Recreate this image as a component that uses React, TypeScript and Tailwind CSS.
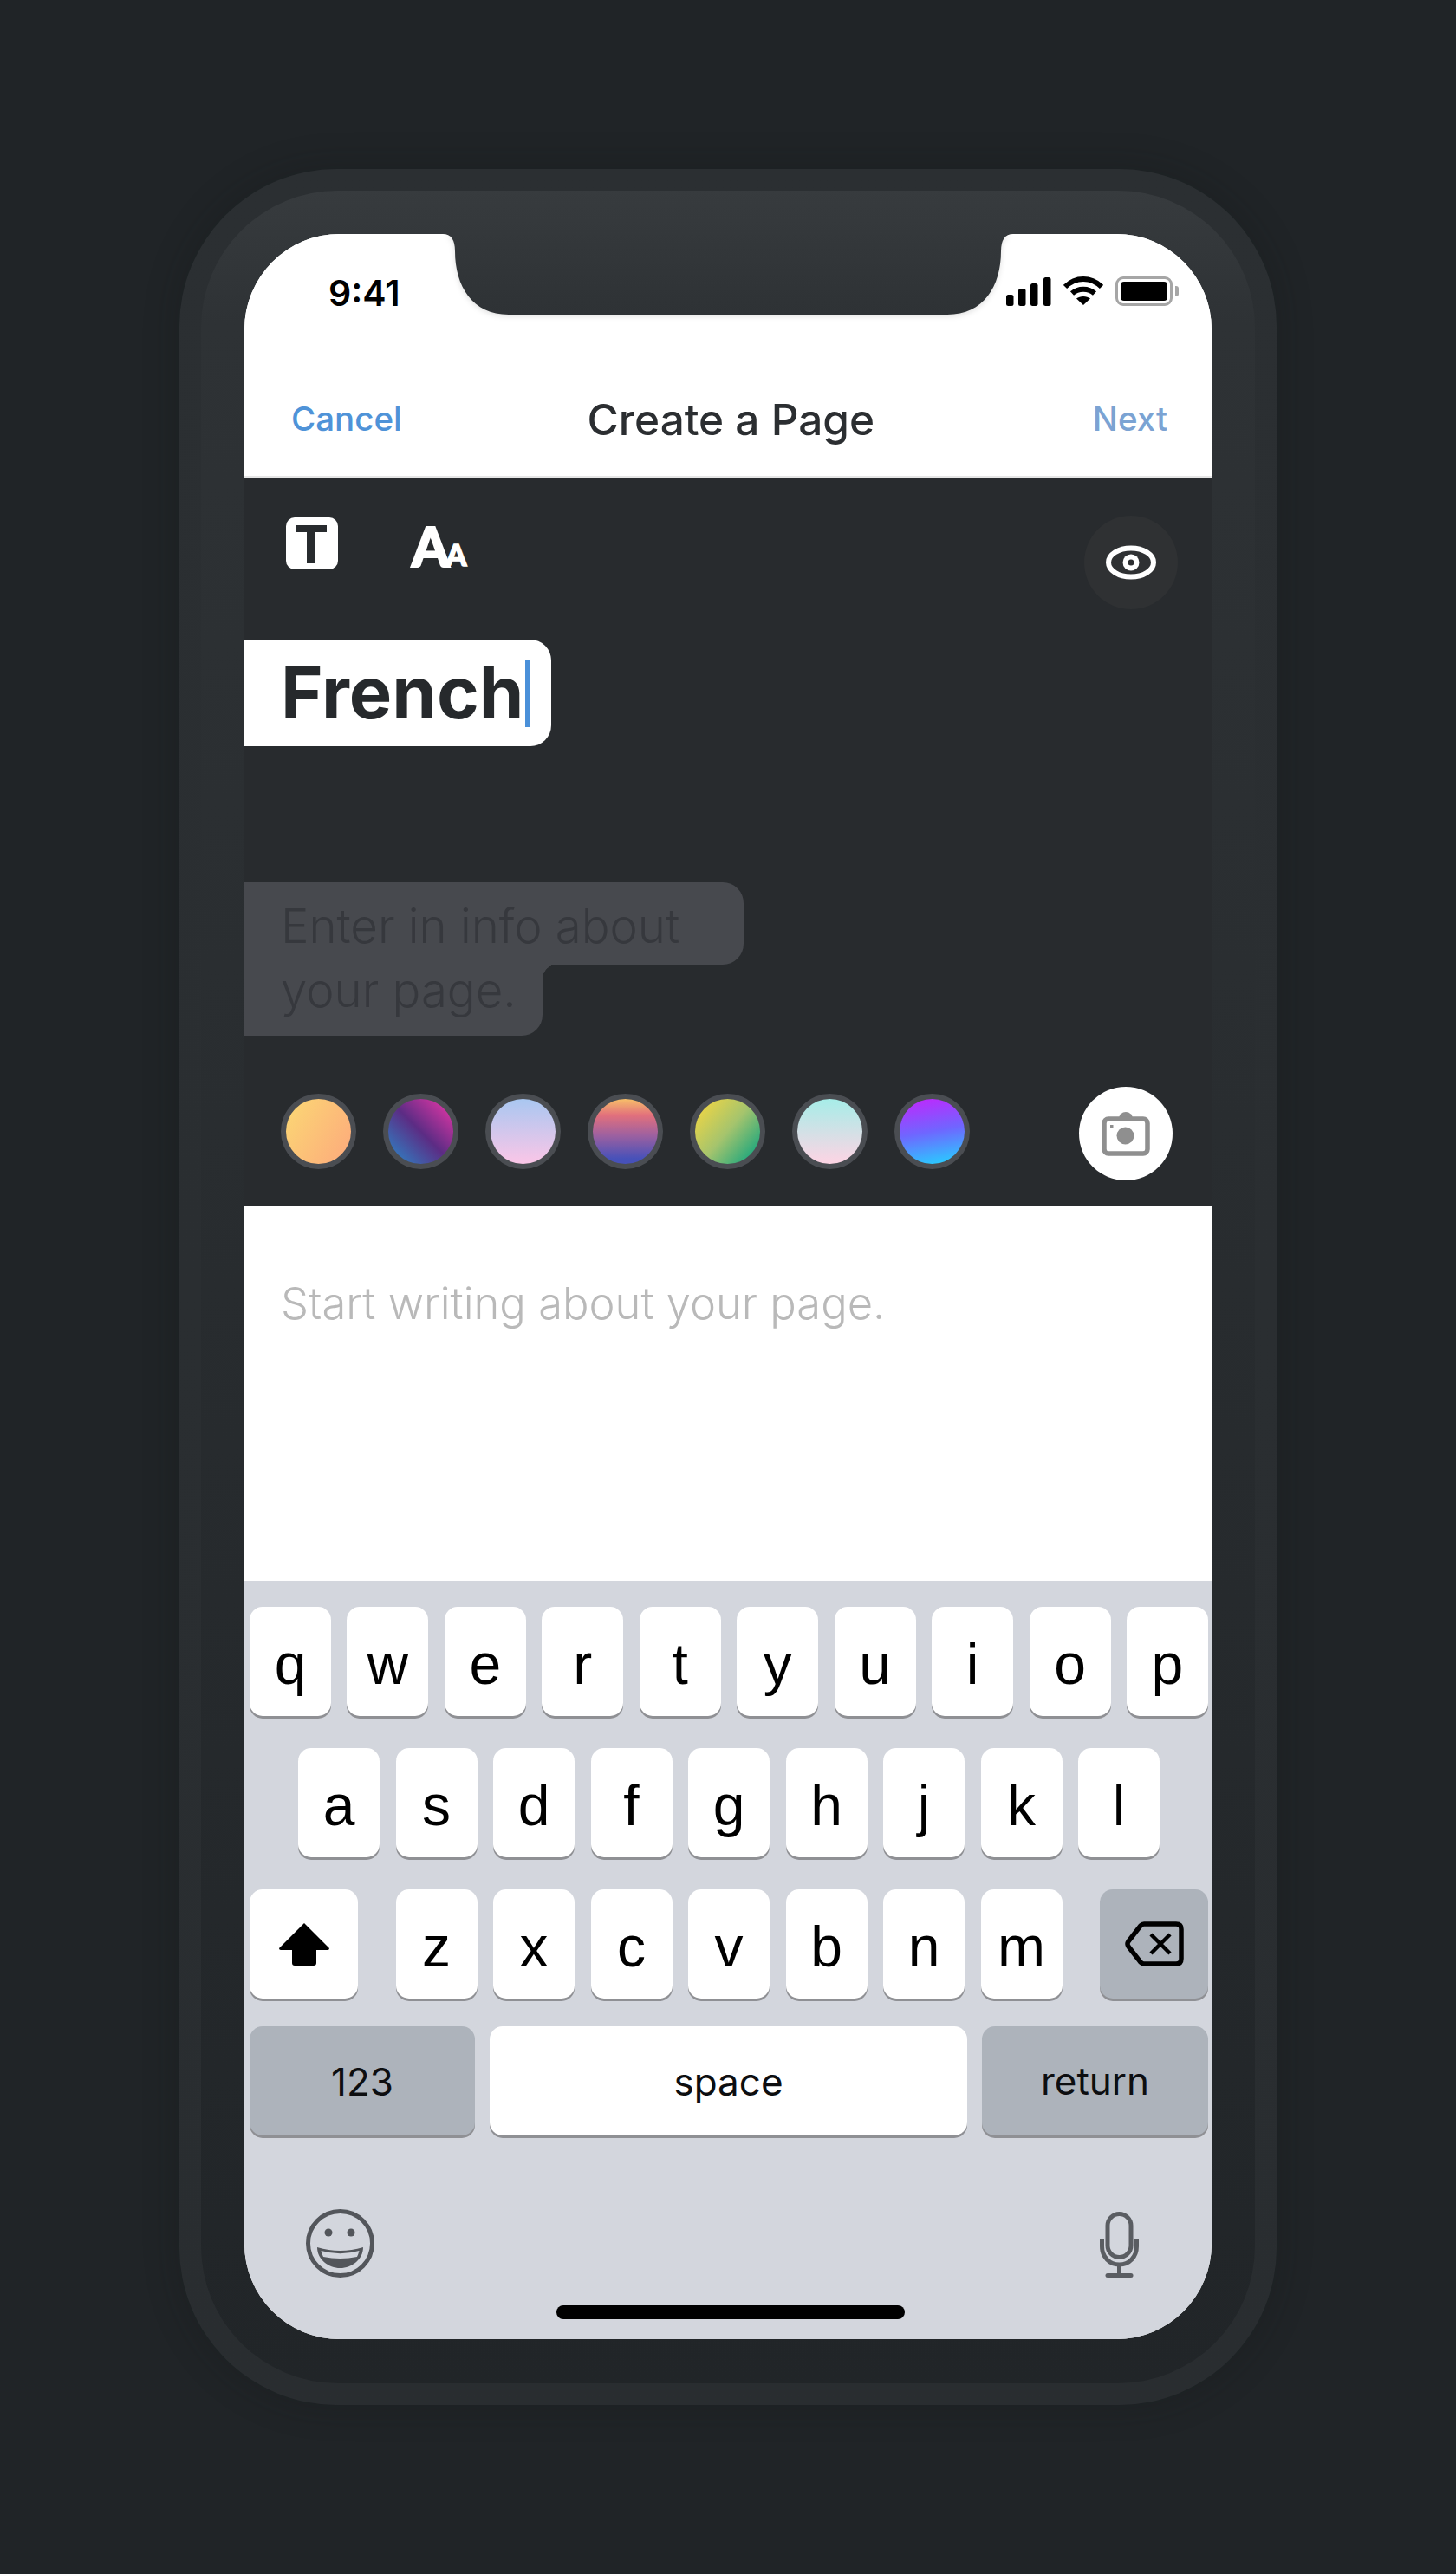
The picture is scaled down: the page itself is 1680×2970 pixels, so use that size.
const swatches = [
  "bg-[linear-gradient(120deg,#fbd874,#fda97c)]",
  "bg-[linear-gradient(45deg,#3378bd_10%,#5c2c84_50%,#da36a4_92%)]",
  "bg-[linear-gradient(180deg,#a9c7f1,#fbc6e7)]",
  "bg-[linear-gradient(180deg,#f7bf69_0%,#e2707c_25%,#a0619f_55%,#4751b9_92%)]",
  "bg-[linear-gradient(130deg,#eed545_8%,#a5c46d_50%,#16a57e_92%)]",
  "bg-[linear-gradient(180deg,#a6ede8,#fed4e4)]",
  "bg-[linear-gradient(170deg,#bb2bfd_5%,#6f66ff_50%,#29cbff_95%)]",
];

const rowOne = ["q", "w", "e", "r", "t", "y", "u", "i", "o", "p"];
const rowTwo = ["a", "s", "d", "f", "g", "h", "j", "k", "l"];
const rowThree = ["z", "x", "c", "v", "b", "n", "m"];

function Key({ label }: { label: string }) {
  return (
    <div className="flex h-[126px] w-[94px] items-center justify-center rounded-[15px] bg-white pt-[6px] text-[66px] text-black shadow-[0_3px_0_#8f9094]">
      {label}
    </div>
  );
}

function Notch() {
  return (
    <svg
      className="absolute left-[223px] top-0 drop-shadow-[0_2px_3px_rgba(0,0,0,0.12)]"
      width="670"
      height="93"
      viewBox="0 0 670 93"
    >
      <defs>
        <linearGradient id="notch" x1="0" y1="0" x2="0" y2="1">
          <stop offset="0" stopColor="#34383b" />
          <stop offset="1" stopColor="#2e3235" />
        </linearGradient>
      </defs>
      <path
        d="M0 0 H6 Q20 0 20 20 C20 60 40 93 82 93 H588 C630 93 650 60 650 20 Q650 0 664 0 H670 V-2 H0 Z"
        fill="url(#notch)"
      />
    </svg>
  );
}

function StatusIcons() {
  return (
    <div className="flex items-center gap-[14px]">
      <svg width="52" height="33" viewBox="0 0 52 33" fill="#000">
        <rect x="0" y="20" width="8.5" height="13" rx="2.5" />
        <rect x="14" y="13" width="8.5" height="20" rx="2.5" />
        <rect x="28" y="7" width="8.5" height="26" rx="2.5" />
        <rect x="43" y="0" width="8.5" height="33" rx="2.5" />
      </svg>
      <svg width="46" height="34" viewBox="0 0 46 34" fill="none" stroke="#000" strokeWidth="6">
        <path d="M2 12 C14 0 32 0 44 12" />
        <path d="M10 19.5 C17 13 29 13 36 19.5" />
        <path d="M23 33 L15 25.5 C19 22 27 22 31 25.5 Z" fill="#000" stroke="none" />
      </svg>
      <div className="flex items-center">
        <div className="h-[34px] w-[66px] rounded-[9px] border-[3px] border-[#a6a6a6] p-[3px]">
          <div className="h-full w-full rounded-[4px] bg-black" />
        </div>
        <div className="ml-[3px] h-[12px] w-[4px] rounded-r-[3px] bg-[#a6a6a6]" />
      </div>
    </div>
  );
}

function EyeIcon() {
  return (
    <svg width="58" height="40" viewBox="0 0 58 40" fill="none">
      <ellipse cx="29" cy="20" rx="26" ry="16.5" stroke="#fff" strokeWidth="6" />
      <circle cx="29" cy="20" r="9.5" fill="#fff" />
      <circle cx="29" cy="20" r="3.5" fill="#2c2e30" />
    </svg>
  );
}

function CameraIcon() {
  return (
    <svg width="56" height="52" viewBox="0 0 56 52" fill="none">
      <circle cx="28" cy="9" r="8" fill="#8f8f8f" />
      <rect x="3" y="9" width="50" height="40" rx="5" fill="#fff" stroke="#8f8f8f" strokeWidth="5.5" />
      <circle cx="27.5" cy="28.5" r="10" fill="#8f8f8f" />
      <rect x="10" y="16" width="3.5" height="3.5" fill="#8f8f8f" />
    </svg>
  );
}

function ShiftIcon() {
  return (
    <svg width="58" height="49" viewBox="0 0 58 49" fill="#000">
      <path d="M29 0 L58 29 Q58 31 56 31 H43 V46 Q43 49 40 49 H18 Q15 49 15 46 V31 H2 Q0 31 0 29 Z" />
    </svg>
  );
}

function DeleteIcon() {
  return (
    <svg width="68" height="52" viewBox="0 0 68 52" fill="none" stroke="#000" strokeWidth="5.5">
      <path
        d="M22 3 H59 Q65 3 65 9 V43 Q65 49 59 49 H22 Q20 49 18 47 L4 29 Q2 26 4 23 L18 5 Q20 3 22 3 Z"
        strokeLinejoin="round"
      />
      <path d="M30 15 L52 37 M52 15 L30 37" strokeWidth="4.5" />
    </svg>
  );
}

function EmojiIcon() {
  return (
    <svg width="79" height="79" viewBox="0 0 79 79" fill="none">
      <circle cx="39.5" cy="39.5" r="37" stroke="#53565b" strokeWidth="5" />
      <circle cx="26" cy="27" r="4.5" fill="#53565b" />
      <circle cx="52" cy="27" r="4.5" fill="#53565b" />
      <path d="M13 44 Q39.5 52 66 44 C66 58 53 68 39.5 68 C26 68 13 58 13 44 Z" fill="#53565b" />
      <path d="M17.5 48 Q39.5 54.5 61.5 48 Q60.5 52 59 55 Q39.5 59 20 55 Q18.5 52 17.5 48 Z" fill="#d3d6dd" />
    </svg>
  );
}

function MicIcon() {
  return (
    <svg width="45" height="76" viewBox="0 0 45 76" fill="none" stroke="#5a5d62" strokeWidth="5">
      <rect x="9" y="2.5" width="27" height="50" rx="13.5" />
      <path d="M2.5 32 V40 C2.5 52 11 61 22.5 61 C34 61 42.5 52 42.5 40 V32" />
      <path d="M22.5 61 V73" />
      <path d="M9 73.5 H36" strokeLinecap="round" />
    </svg>
  );
}

export default function App() {
  return (
    <div className="flex h-[2970px] justify-center bg-[#202427] pt-[195px] font-['Liberation_Sans',sans-serif]">
      <div className="h-[2580px] w-[1266px] rounded-[182px] bg-[linear-gradient(180deg,#2b2f32,#292d30)] p-[25px] shadow-[0_0_40px_rgba(20,22,24,0.3)]">
        <div className="h-[2530px] w-[1216px] rounded-[158px] bg-[linear-gradient(180deg,#373b3e_0%,#2e3235_6%,#282c2f_50%,#212528_100%)] pb-[51px] pl-[50px] pr-[50px] pt-[50px]">
          <div className="relative flex h-[2429px] w-[1116px] flex-col overflow-hidden rounded-[110px] bg-white">
            <Notch />

            <div className="h-[282px] border-b-[3px] border-[#e6e6e6] bg-white font-['Inter',sans-serif]">
              <div className="flex items-start justify-between pl-[97px] pr-[38px] pt-[44px]">
                <span className="text-[41px] font-semibold leading-[48px] text-black">9:41</span>
                <div className="pt-[5px]">
                  <StatusIcons />
                </div>
              </div>
              <div className="mt-[85px] flex items-center justify-between pl-[54px] pr-[51px]">
                <span className="text-[38.5px] font-medium text-[#4f93d8]">Cancel</span>
                <span className="pr-[38px] text-[49.5px] font-medium text-[#2b2e31]">Create a Page</span>
                <span className="text-[38.5px] font-medium text-[#7ba3d3]">Next</span>
              </div>
            </div>

            <div className="h-[840px] bg-[#282b2e] font-['Inter',sans-serif]">
              <div className="flex items-start justify-between pl-[48px] pr-[39px] pt-[43px]">
                <div className="flex items-start gap-[85px] pt-[2px]">
                  <div className="relative flex h-[60px] w-[60px] items-center justify-center rounded-[10px] bg-white">
                    <div className="absolute left-[12px] top-[9px] h-[8px] w-[35px] bg-[#282b2e]" />
                    <div className="absolute left-[24px] top-[9px] h-[44px] w-[10px] bg-[#282b2e]" />
                  </div>
                  <div className="flex h-[56px] items-end font-['Lato',sans-serif] text-white">
                    <span className="text-[62px] font-black leading-[46px] [-webkit-text-stroke:2px_white]">A</span>
                    <span className="-ml-[4px] text-[34px] font-black leading-[27px] [-webkit-text-stroke:1.5px_white]">A</span>
                  </div>
                </div>
                <div className="flex h-[108px] w-[108px] items-center justify-center rounded-full bg-[#2f3133]">
                  <EyeIcon />
                </div>
              </div>

              <div className="mt-[35px] flex h-[123px] w-[354px] items-center rounded-r-[24px] bg-white pl-[42px]">
                <span className="text-[83px] font-bold leading-none text-[#26292c]">French</span>
                <div className="ml-[1px] h-[78px] w-[6px] bg-[#4a90d9]" />
              </div>

              <div className="mt-[157px] text-[54.5px] font-light text-[#36383d]">
                <div className="flex h-[95px] w-[576px] items-center rounded-r-[24px] bg-[#47494e] pl-[42px] pt-[7px]">
                  Enter in info about
                </div>
                <div className="relative flex h-[82px] w-[344px] items-start rounded-br-[24px] bg-[#47494e] pl-[42px] leading-[58px]">
                  your page.
                  <div className="absolute left-[344px] top-0 h-[16px] w-[16px] bg-[radial-gradient(circle_at_100%_100%,transparent_15.5px,#47494e_16px)]" />
                </div>
              </div>

              <div className="mt-[59px] flex items-start justify-between pl-[42px] pr-[45px]">
                <div className="flex items-center gap-[31px] pt-[8px]">
                  {swatches.map((swatch) => (
                    <div key={swatch} className="rounded-full bg-[#4a4d52] p-[6px]">
                      <div className={`h-[75px] w-[75px] rounded-full ${swatch}`} />
                    </div>
                  ))}
                </div>
                <div className="flex h-[108px] w-[108px] items-center justify-center rounded-full bg-white">
                  <CameraIcon />
                </div>
              </div>
            </div>

            <div className="h-[432px] bg-white pl-[42px] pt-[77px] font-['Inter',sans-serif] text-[50.7px] font-light leading-[70px] text-[#b9b9b9]">
              Start writing about your page.
            </div>

            <div className="relative flex-1 bg-[#d3d6dd] pl-[6px] pr-[4px] pt-[30px]">
              <div className="flex justify-between">
                {rowOne.map((key) => (
                  <Key key={key} label={key} />
                ))}
              </div>
              <div className="mt-[37px] flex justify-center gap-[18.5px]">
                {rowTwo.map((key) => (
                  <Key key={key} label={key} />
                ))}
              </div>
              <div className="mt-[37px] flex justify-between">
                <div className="flex h-[126px] w-[125px] items-center justify-center rounded-[15px] bg-white shadow-[0_3px_0_#8f9094]">
                  <ShiftIcon />
                </div>
                <div className="flex gap-[18.5px]">
                  {rowThree.map((key) => (
                    <Key key={key} label={key} />
                  ))}
                </div>
                <div className="flex h-[126px] w-[125px] items-center justify-center rounded-[15px] bg-[#adb3bb] shadow-[0_3px_0_#8f9094]">
                  <DeleteIcon />
                </div>
              </div>
              <div className="mt-[32px] flex items-center justify-between font-['Inter',sans-serif] text-[44px] text-[#0d0e10]">
                <div className="flex h-[126px] w-[260px] items-center justify-center rounded-[15px] bg-[#adb3bb] pt-[2px] shadow-[0_3px_0_#8f9094]">
                  123
                </div>
                <div className="flex h-[126px] w-[551px] items-center justify-center rounded-[15px] bg-white pt-[2px] shadow-[0_3px_0_#8f9094]">
                  space
                </div>
                <div className="flex h-[126px] w-[261px] items-center justify-center rounded-[15px] bg-[#adb3bb] shadow-[0_3px_0_#8f9094]">
                  return
                </div>
              </div>
              <div className="mt-[85px] flex items-start justify-between pl-[65px] pr-[80px]">
                <EmojiIcon />
                <div className="pt-[3px]">
                  <MicIcon />
                </div>
              </div>
              <div className="absolute bottom-[23px] left-[360px] h-[16px] w-[402px] rounded-full bg-black" />
            </div>
          </div>
        </div>
      </div>
    </div>
  );
}
